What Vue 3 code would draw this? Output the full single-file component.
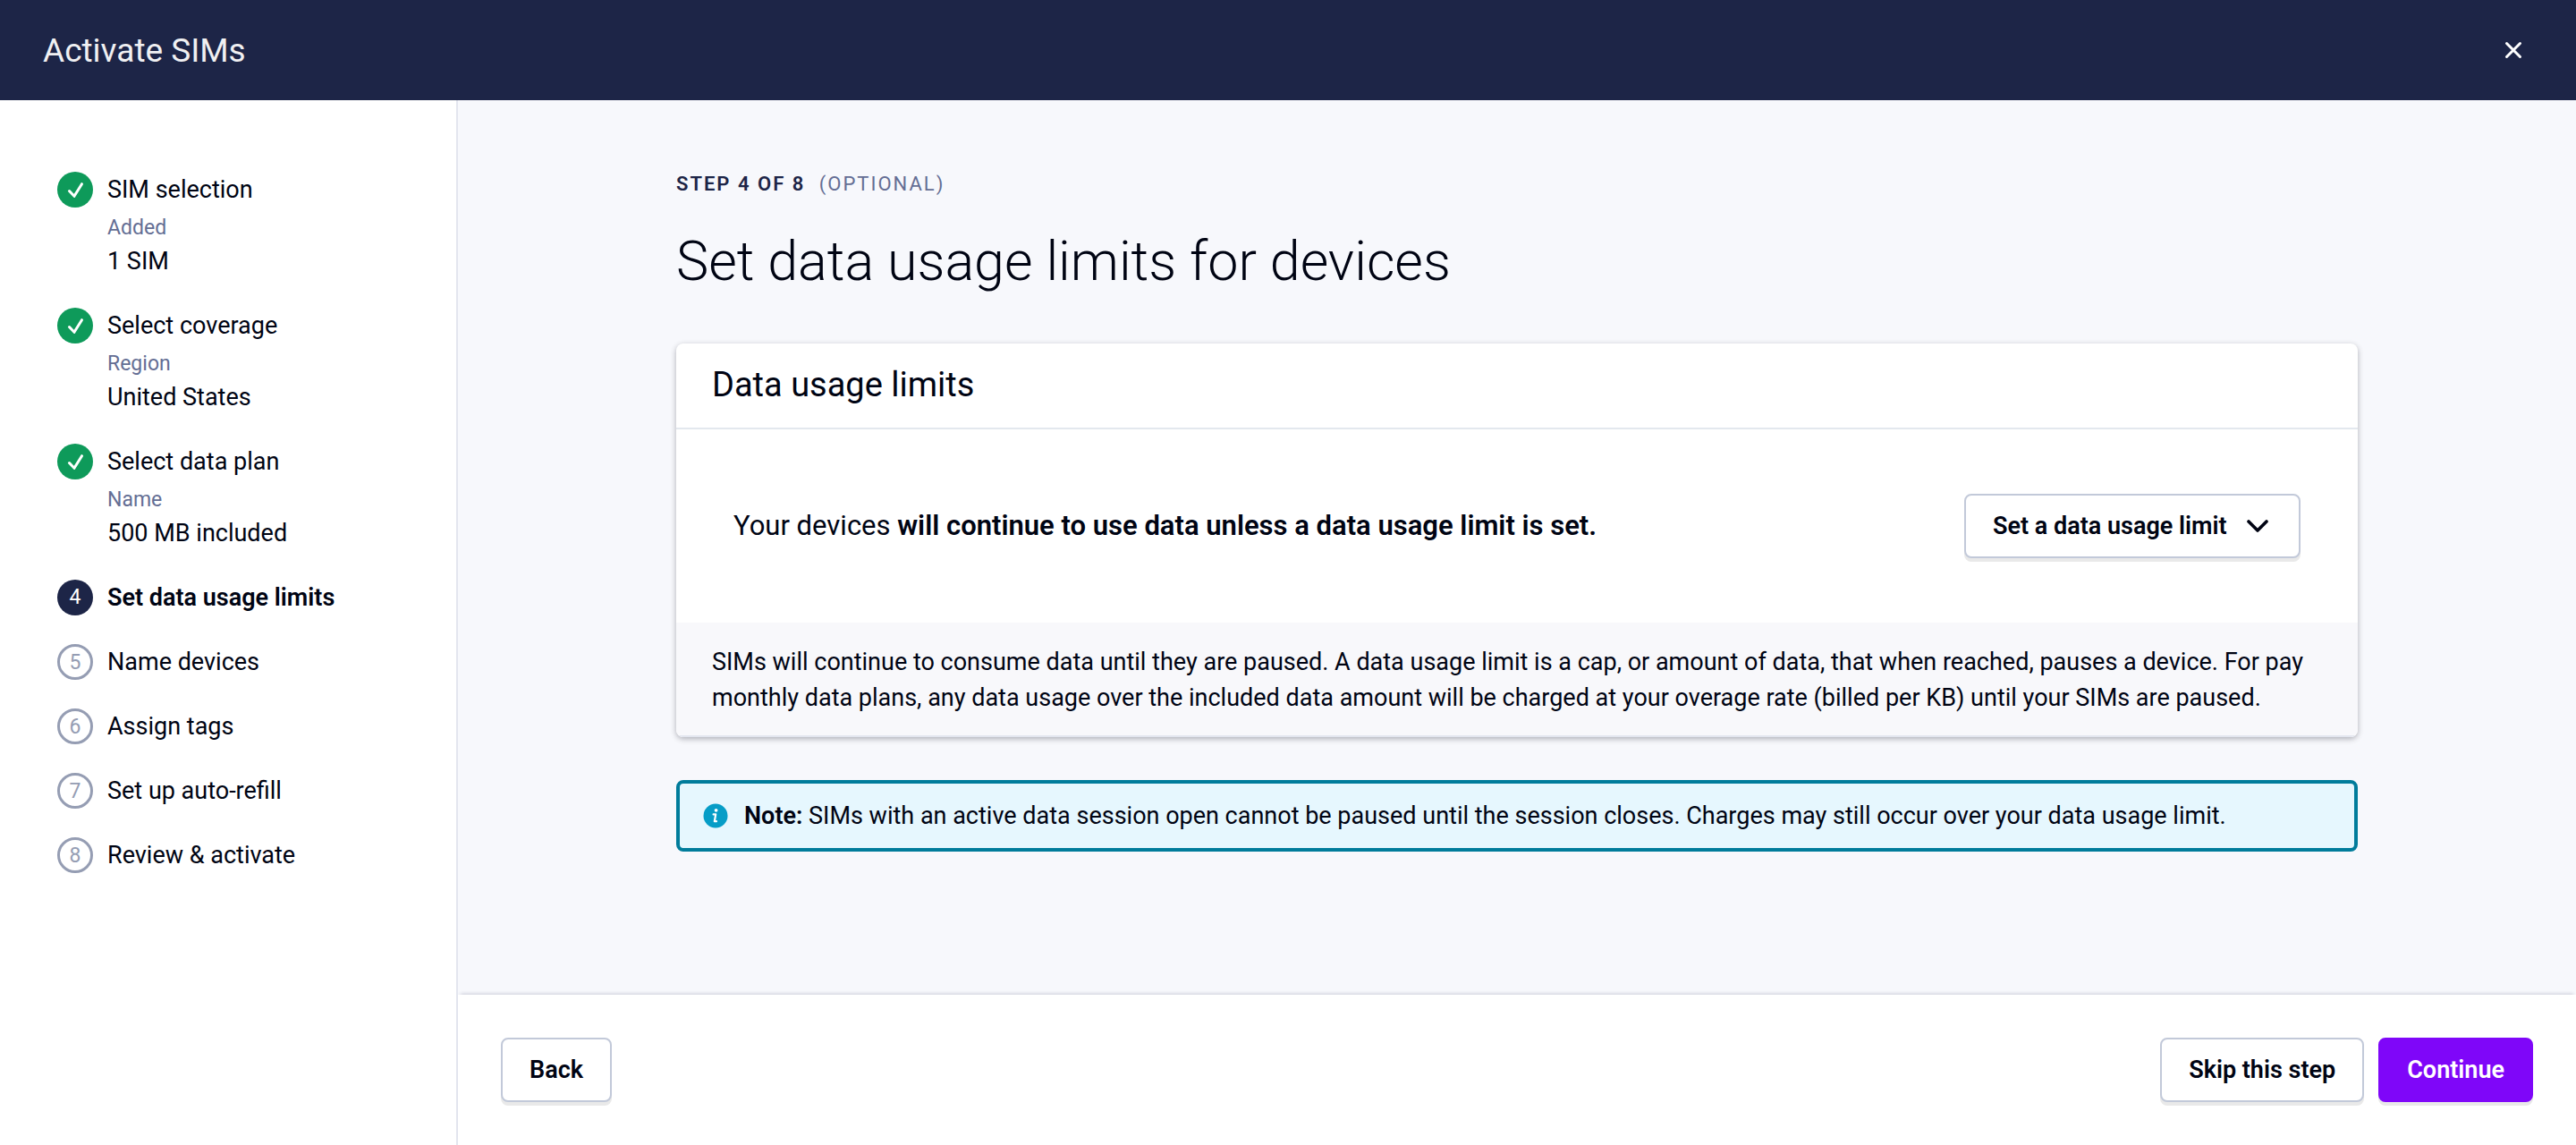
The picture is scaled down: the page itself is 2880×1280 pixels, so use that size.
<script setup>
import { ref } from 'vue'

const steps = [
  { title: 'SIM selection', state: 'done', label: 'Added', value: '1 SIM' },
  { title: 'Select coverage', state: 'done', label: 'Region', value: 'United States' },
  { title: 'Select data plan', state: 'done', label: 'Name', value: '500 MB included' },
  { title: 'Set data usage limits', state: 'current' },
  { title: 'Name devices', state: 'todo' },
  { title: 'Assign tags', state: 'todo' },
  { title: 'Set up auto-refill', state: 'todo' },
  { title: 'Review & activate', state: 'todo' },
]

const limit = ref('')
</script>

<template>
  <div class="wizard">
    <header class="topbar">
      <h1 class="topbar-title">Activate SIMs</h1>
      <button class="close" type="button" aria-label="Close">
        <svg viewBox="0 0 20 20" width="20" height="20" aria-hidden="true">
          <path d="M2.5 2.5 17.5 17.5M17.5 2.5 2.5 17.5" fill="none" stroke="currentColor" stroke-width="3" stroke-linecap="round" />
        </svg>
      </button>
    </header>

    <div class="columns">
      <nav class="sidebar" aria-label="Steps">
        <ol class="steps">
          <li v-for="(step, i) in steps" :key="step.title" class="step" :class="step.state">
            <span class="badge">
              <svg v-if="step.state === 'done'" viewBox="0 0 40 40" width="40" height="40" aria-hidden="true">
                <path d="M13.5 21.5 19 27.3 27.5 13.7" fill="none" stroke="#fff" stroke-width="3" stroke-linecap="round" stroke-linejoin="round" />
              </svg>
              <template v-else>{{ i + 1 }}</template>
            </span>
            <div class="step-text">
              <div class="step-title">{{ step.title }}</div>
              <template v-if="step.label">
                <div class="step-label">{{ step.label }}</div>
                <div class="step-value">{{ step.value }}</div>
              </template>
            </div>
          </li>
        </ol>
      </nav>

      <div class="main">
        <main class="content">
          <p class="eyebrow"><strong>Step 4 of 8</strong> <span>(Optional)</span></p>
          <h2 class="title">Set data usage limits for devices</h2>

          <section class="card">
            <h3 class="card-head">Data usage limits</h3>
            <div class="card-body">
              <label class="card-copy" for="limit">Your devices <strong>will continue to use data unless a data usage limit is set.</strong></label>
              <div class="picker">
                <select id="limit" v-model="limit" class="btn picker-select">
                  <option value="">Set a data usage limit</option>
                </select>
                <svg class="picker-icon" viewBox="0 0 24 16" width="24" height="16" aria-hidden="true">
                  <path d="M2 3 12 13 22 3" fill="none" stroke="currentColor" stroke-width="3.6" stroke-linecap="round" stroke-linejoin="round" />
                </svg>
              </div>
            </div>
            <p class="card-note">SIMs will continue to consume data until they are paused. A data usage limit is a cap, or amount of data, that when reached, pauses a device. For pay monthly data plans, any data usage over the included data amount will be charged at your overage rate (billed per KB) until your SIMs are paused.</p>
          </section>

          <div class="alert" role="note">
            <svg class="alert-icon" viewBox="0 0 28 28" width="28" height="28" aria-hidden="true">
              <circle cx="14" cy="14" r="13.5" fill="#069dc7" />
              <circle cx="14.6" cy="7.8" r="1.9" fill="#fff" />
              <path d="M11.6 12.4h2.6l-1.4 7.8h2.2" fill="none" stroke="#fff" stroke-width="2.2" stroke-linecap="round" stroke-linejoin="round" />
            </svg>
            <p class="alert-text"><strong>Note:</strong> SIMs with an active data session open cannot be paused until the session closes. Charges may still occur over your data usage limit.</p>
          </div>
        </main>

        <footer class="footer">
          <button class="btn" type="button">Back</button>
          <div class="footer-actions">
            <button class="btn" type="button">Skip this step</button>
            <button class="btn primary" type="button">Continue</button>
          </div>
        </footer>
      </div>
    </div>
  </div>
</template>

<style>
html {
  background: #fff;
}
</style>

<style scoped>
.wizard {
  display: flex;
  flex-direction: column;
  min-height: 100vh;
  font-family: Roboto, "Liberation Sans", sans-serif;
  font-size: 27px;
  line-height: 40px;
  color: #000413;
}

.wizard * {
  box-sizing: border-box;
}

h1, h2, h3, p, ol {
  margin: 0;
  padding: 0;
  font-weight: 400;
}

.topbar {
  display: flex;
  align-items: center;
  justify-content: space-between;
  height: 112px;
  padding: 0 48px;
  background: #1d2547;
  color: #f0f0f2;
}

.topbar-title {
  padding-top: 2px;
  font-size: 37px;
  line-height: 48px;
}

.close {
  display: grid;
  place-items: center;
  width: 44px;
  height: 44px;
  padding: 0;
  border: 0;
  background: none;
  color: #fff;
}

.columns {
  display: flex;
  flex: 1;
}

.sidebar {
  flex: none;
  width: 512px;
  padding: 80px 64px;
  border-right: 2px solid #e3e6ef;
}

.steps {
  display: flex;
  flex-direction: column;
  gap: 32px;
  list-style: none;
}

.step {
  display: flex;
  gap: 16px;
}

.badge {
  display: grid;
  flex: none;
  place-items: center;
  width: 40px;
  height: 40px;
  border-radius: 50%;
  font-size: 23px;
  line-height: 36px;
}

.done .badge {
  background: #0e9a5a;
}

.current .badge {
  background: #1d2547;
  color: #fff;
}

.todo .badge {
  border: 3px solid #959db3;
  color: #959db3;
}

.current .step-title {
  font-weight: 600;
}

.step-label {
  padding-top: 6px;
  font-size: 23px;
  line-height: 34px;
  color: #646e94;
}

.main {
  display: flex;
  flex: 1;
  flex-direction: column;
  min-width: 0;
}

.content {
  flex: 1;
  padding: 76px 48px;
  background: #f7f8fc;
}

.content > * {
  max-width: 1880px;
  margin-left: auto;
  margin-right: auto;
}

.eyebrow {
  font-size: 22px;
  line-height: 36px;
  letter-spacing: 2px;
  text-transform: uppercase;
  color: #646e94;
}

.eyebrow strong {
  margin-right: 8px;
  font-weight: 600;
  color: #1d2547;
}

.title {
  padding: 30px 0 54px;
  font-size: 61px;
  line-height: 76px;
  font-weight: 300;
}

.card {
  overflow: hidden;
  border-radius: 8px;
  background: #fff;
  box-shadow: 0 2px 6px rgba(0, 4, 19, 0.3);
}

.card-head {
  padding: 22px 40px 24px;
  border-bottom: 2px solid #e3e8ee;
  font-size: 38px;
  line-height: 48px;
}

.card-body {
  display: flex;
  align-items: center;
  justify-content: space-between;
  gap: 32px;
  padding: 72px 64px;
}

.card-copy {
  font-size: 31px;
}

.card-note {
  padding: 24px 40px 22px;
  border-bottom: 2px solid #e3e6ef;
  background: #f8f8fb;
}

strong {
  font-weight: 600;
}

.btn {
  height: 72px;
  padding: 0 30px;
  border: 2px solid #c2c9d9;
  border-radius: 8px;
  background: #fff;
  box-shadow: 0 4px 0 #e9e9e9;
  color: #000413;
  font: 600 27px/40px Roboto, "Liberation Sans", sans-serif;
}

.primary {
  border-color: #7f06f9;
  background: #7f06f9;
  color: #fff;
}

.picker {
  position: relative;
  flex: none;
}

.picker-select {
  appearance: none;
  padding-right: 80px;
}

.picker-icon {
  position: absolute;
  top: 28px;
  right: 36px;
  pointer-events: none;
}

.alert {
  display: flex;
  align-items: center;
  gap: 18px;
  margin-top: 48px;
  padding: 16px 26px;
  border: 4px solid #007c9b;
  border-radius: 8px;
  background: #e6f7fe;
}

.alert-icon {
  flex: none;
}

.footer {
  position: relative;
  display: flex;
  justify-content: space-between;
  padding: 48px;
  background: #fff;
  box-shadow: 0 -4px 4px -3px rgba(29, 37, 71, 0.2);
}

.footer-actions {
  display: flex;
  gap: 16px;
}
</style>
